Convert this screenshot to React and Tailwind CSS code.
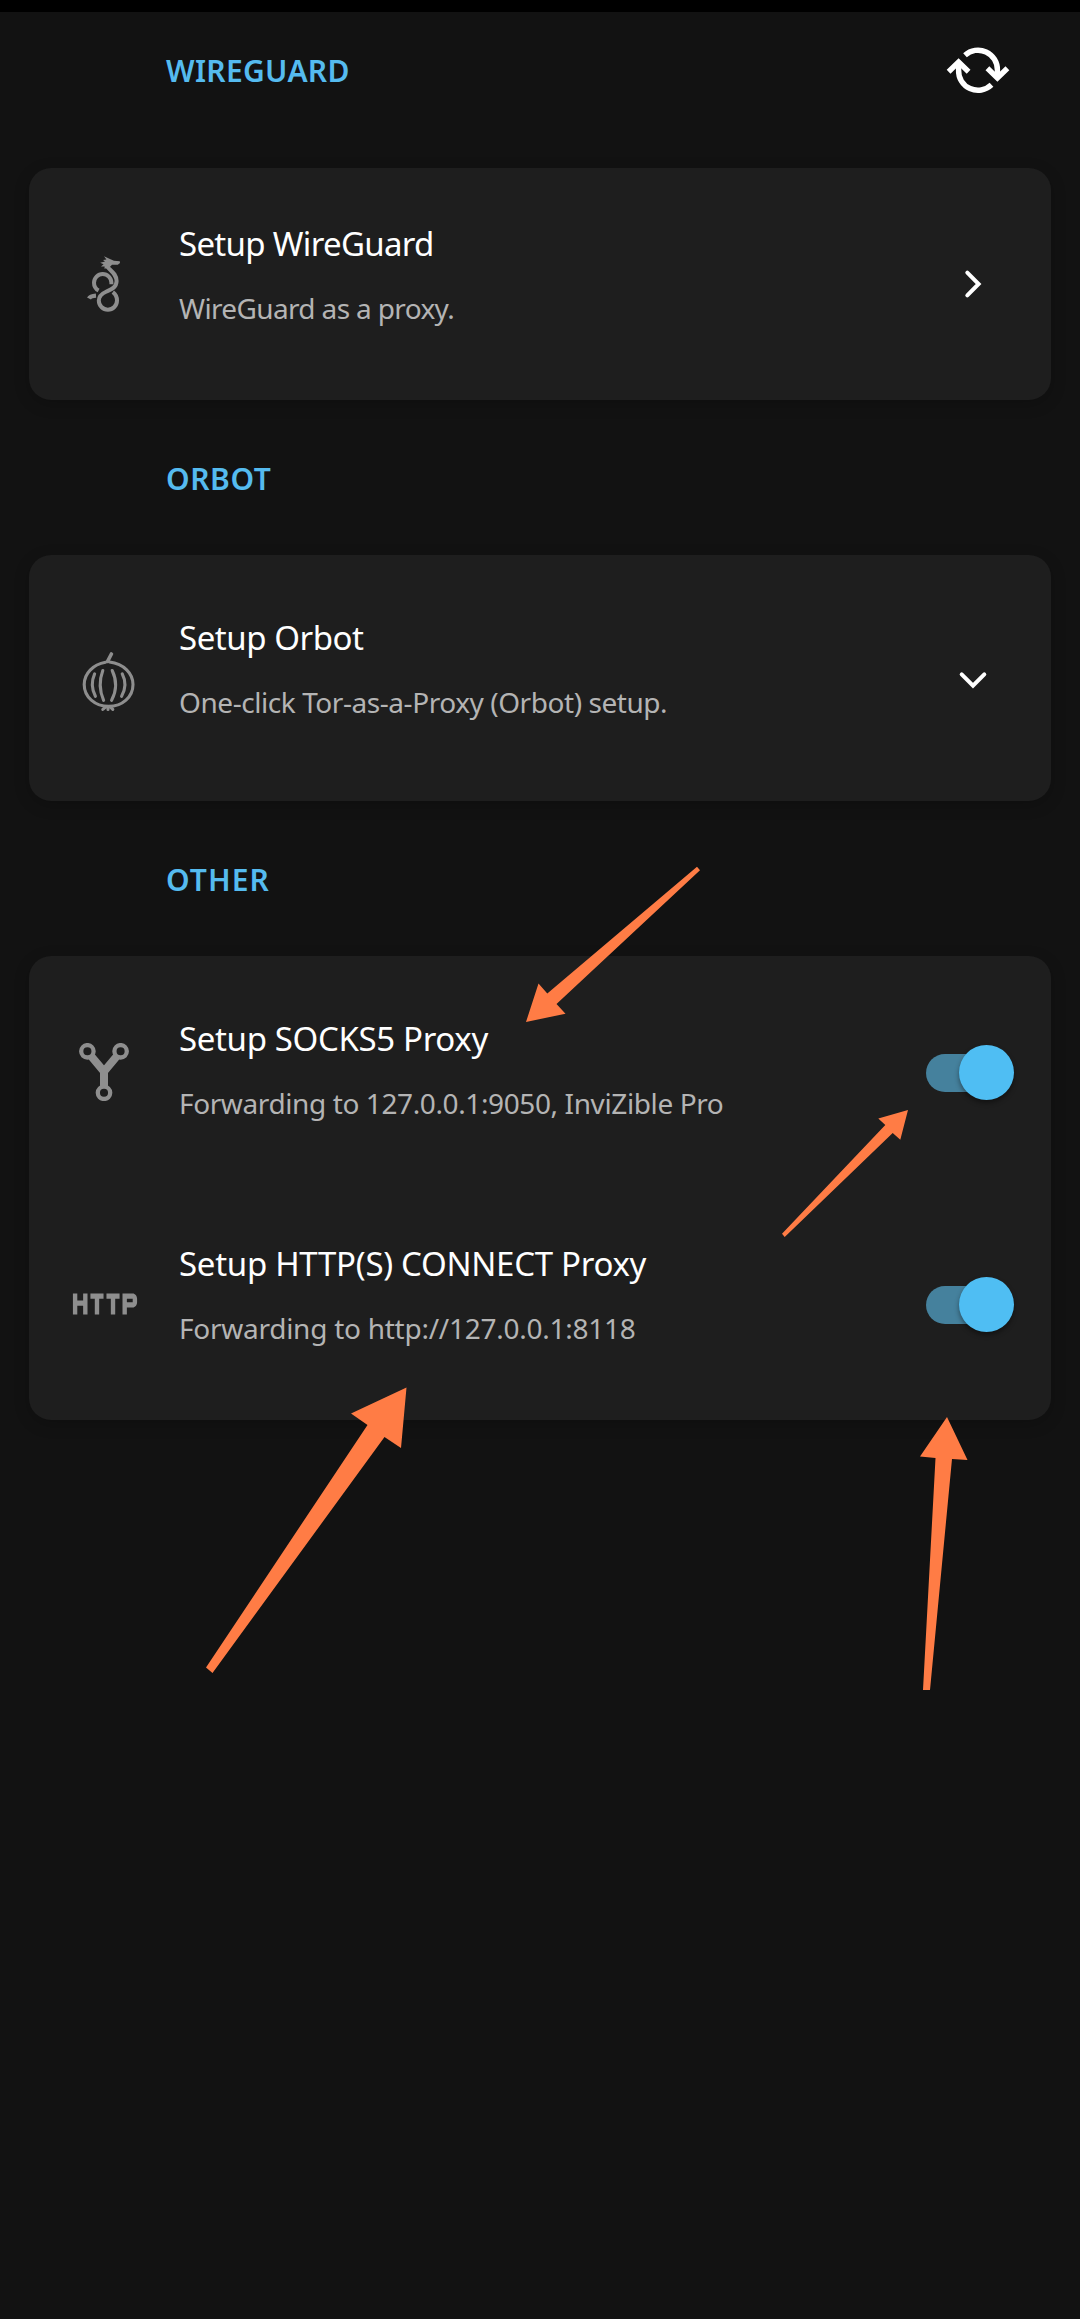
import React from "react";
import { MdHttp } from "react-icons/md";

function RefreshIcon() {
  return (
    <svg width="66" height="48" viewBox="945 46 66 48" fill="none" stroke="#fff" strokeWidth="5.4">
      <path d="M965 55.2 A19.4 19.4 0 0 1 997.4 70 V77.5" />
      <path d="M991.5 84.8 A19.4 19.4 0 0 1 958.6 70 V62.5" />
      <path d="M987.4 68.2 L997.4 78 L1007.4 68.2" />
      <path d="M948.6 71.8 L958.6 62 L968.6 71.8" />
    </svg>
  );
}

function WireGuardIcon() {
  return (
    <svg width="34" height="58" viewBox="87 255 34 58" fill="none" stroke="#8e8e8e" strokeWidth="4">
      <path d="M106.5 266 C111 271 116.6 274 116.6 281 C116.6 287.5 111 289.5 106.5 291.5 C101 294 98.8 296.5 98.8 300.6 A9.1 9.1 0 0 0 117 300.6 C117 297 115 293.8 112.8 292.2" />
      <path d="M98.6 290.6 C95.6 289 94 286 94 282.8 A8.7 8.7 0 0 1 111.4 282.8 V284.2" />
      <path d="M89 298.6 C90 296.6 92.5 295.8 96 295.6" strokeWidth="4.4" />
      <path
        d="M104 256.2 L110.5 259.2 L114 260.8 L119.8 261.2 L120 263 L117.8 264.8 L112 264.8 L109.6 267.2 L104.5 268.8 L104.6 266.6 L101 266.4 L103.6 264.2 L100.2 262.8 L105 261.4 L103 260 L106.4 259.6 Z"
        fill="#8e8e8e"
        stroke="none"
      />
    </svg>
  );
}

function OnionIcon() {
  return (
    <svg width="54" height="60" viewBox="82 652 54 60" fill="none" stroke="#8e8e8e" strokeWidth="3.1" strokeLinecap="round">
      <path d="M105.5 662.3 C93 664.5 84.2 673.5 84.2 684.5 C84.2 697 95 706.4 108.7 706.4 C122.4 706.4 133 697 133 684.5 C133 673.5 124 663.8 109.5 662" />
      <path d="M111.4 654 L107.6 661.4" strokeWidth="3.6" />
      <path d="M94.6 673.8 Q89.6 685 95.4 696.3" />
      <path d="M102.8 670.5 Q97.2 685.5 103.6 700.3" />
      <path d="M112.2 670.5 Q119.4 685.5 111.6 700.3" />
      <path d="M122.2 673.8 Q128 685 121.6 696.3" />
      <path d="M102.8 709.4 L105 707.6 M108 709.4 V707 M112.8 709.4 L111 707.6" />
    </svg>
  );
}

function ForkIcon() {
  return (
    <svg width="50" height="58" viewBox="79 1043 50 58" fill="none" stroke="#8e8e8e" strokeWidth="4.3">
      <circle cx="87.4" cy="1051.3" r="6.2" />
      <circle cx="120.6" cy="1051.3" r="6.2" />
      <circle cx="104" cy="1092.8" r="6.2" />
      <path d="M91 1056 L104 1071.5 L117 1056 M104 1070 V1086.5" strokeWidth="8" />
    </svg>
  );
}

function Chevron({ down }) {
  return (
    <svg width="32" height="32" viewBox="0 0 32 32" fill="none" stroke="#fff" strokeWidth="4" strokeLinecap="round" className={down ? "rotate-90" : ""}>
      <path d="M10.3 4.7 L21.6 16 L10.3 27.3" />
    </svg>
  );
}

function Toggle() {
  return (
    <div className="relative h-[55px] w-[88px]">
      <div className="mt-[9px] h-[38px] w-[76px] rounded-full bg-[#45819d]" />
      <div className="absolute top-0 right-0 size-[55px] rounded-full bg-[#4fbef3] shadow-[0_3px_5px_rgba(0,0,0,0.4)]" />
    </div>
  );
}

function SectionTitle({ className, textClass, children, action }) {
  return (
    <div className={"flex justify-between pl-[166px] " + className}>
      <h2 className={"h-[40px] text-[30px] leading-[40px] font-semibold whitespace-nowrap text-[#55bbef] " + textClass}>{children}</h2>
      {action}
    </div>
  );
}

function Card({ children }) {
  return (
    <section className="mx-[29px] rounded-[22px] bg-[#1e1e1e] shadow-[0_4px_16px_rgba(0,0,0,0.2)]">
      {children}
    </section>
  );
}

function Row({ icon, title, titleClass, text, textClass, action, className, nudge = "", actionClass = "w-[32px] mr-[62px]" }) {
  return (
    <div className={"flex " + className}>
      <div className={"flex w-[150px] items-center justify-center " + nudge}>{icon}</div>
      <div className="flex-1">
        <h3 className={"h-[44px] text-[33px] leading-[44px] whitespace-nowrap text-white " + titleClass}>{title}</h3>
        <p className={"mt-[24px] h-[36px] text-[28px] leading-[36px] whitespace-nowrap text-[#b4b4b4] " + textClass}>{text}</p>
      </div>
      <div className={"flex items-center justify-center " + actionClass}>{action}</div>
    </div>
  );
}

function Arrow({ points }) {
  return <polygon points={points} fill="#ff7c45" />;
}

export default function App() {
  return (
    <main className="relative h-[2319px] w-[1080px] overflow-hidden bg-[#121212] font-['Noto_Sans',sans-serif]">
      <div className="h-[12px] bg-black" />

      <SectionTitle
        className="h-[156px] pt-[39px]"
        textClass="tracking-[0.3px]"
        action={
          <div className="-mt-[5px] mr-[69px]">
            <RefreshIcon />
          </div>
        }
      >
        WIREGUARD
      </SectionTitle>
      <Card>
        <Row
          className="h-[232px]"
          icon={<WireGuardIcon />}
          titleClass="mt-[54px] tracking-[-0.68px]"
          textClass="tracking-[-0.64px]"
          title="Setup WireGuard"
          text="WireGuard as a proxy."
          action={<Chevron />}
        />
      </Card>

      <SectionTitle className="h-[155px] pt-[59px]" textClass="tracking-[0.6px]">
        ORBOT
      </SectionTitle>
      <Card>
        <Row
          className="h-[246px]"
          nudge="pl-[9px] pt-[8px]"
          icon={<OnionIcon />}
          titleClass="mt-[61px] tracking-[-0.45px]"
          textClass="tracking-[-0.44px]"
          title="Setup Orbot"
          text="One-click Tor-as-a-Proxy (Orbot) setup."
          action={<Chevron down />}
          actionClass="w-[32px] mr-[62px] pt-[4px]"
        />
      </Card>

      <SectionTitle className="h-[155px] pt-[59px]" textClass="tracking-[1.1px]">
        OTHER
      </SectionTitle>
      <Card>
        <Row
          className="h-[232px]"
          icon={<ForkIcon />}
          titleClass="mt-[61px] tracking-[-0.35px]"
          textClass="tracking-[-0.39px]"
          title="Setup SOCKS5 Proxy"
          text="Forwarding to 127.0.0.1:9050, InviZible Pro"
          action={<Toggle />}
          actionClass="w-[88px] mr-[37px]"
        />
        <Row
          className="h-[232px]"
          nudge="pl-[2px]"
          icon={<MdHttp preserveAspectRatio="none" className="h-[84px] w-[70px] text-[#8e8e8e]" />}
          titleClass="mt-[54px] tracking-[-0.29px]"
          textClass="tracking-[-0.26px]"
          title="Setup HTTP(S) CONNECT Proxy"
          text="Forwarding to http://127.0.0.1:8118"
          action={<Toggle />}
          actionClass="w-[88px] mr-[37px]"
        />
      </Card>

      <svg className="pointer-events-none absolute top-0 left-0" width="1080" height="2319" viewBox="0 0 1080 2319">
        <Arrow points="526,1022 538.5,983.5 547.3,993.5 697,866.8 700,870.2 556.5,1004 565.5,1013.7" />
        <Arrow points="908,1110 878.3,1118.4 885.3,1125 782,1233.8 784.7,1237 892.7,1133 900.3,1139.7" />
        <Arrow points="406.5,1387.5 351,1413.5 367.5,1425 206,1667.5 212.5,1673 384.5,1437 401,1448" />
        <Arrow points="947,1417 920,1456.5 935.5,1458 923,1690 930,1690 952,1459 967.5,1460" />
      </svg>
    </main>
  );
}
